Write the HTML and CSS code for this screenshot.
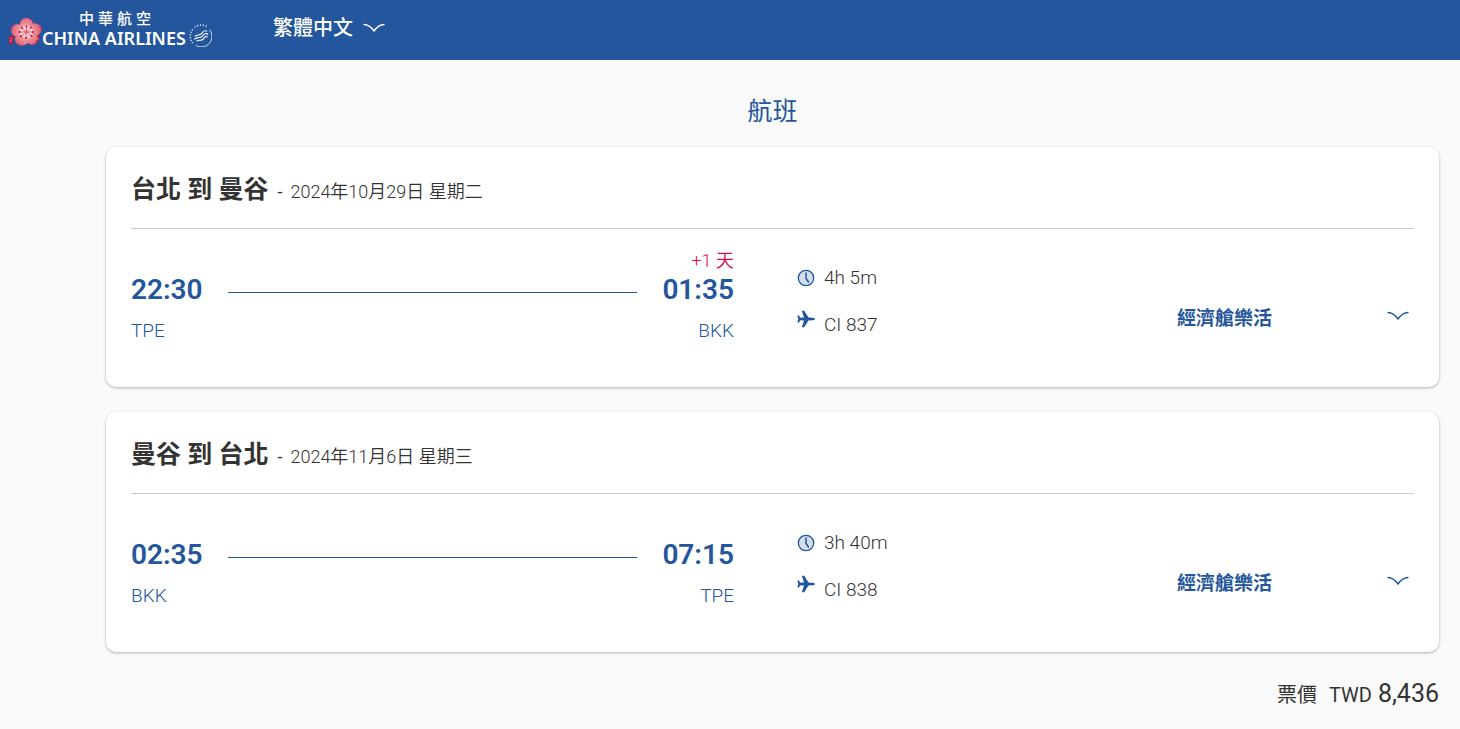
FILE: index.html
```html
<!DOCTYPE html>
<html lang="zh-Hant">
<head>
    <meta charset="UTF-8">
    <meta name="viewport" content="width=device-width, initial-scale=1.0">
    <title>China Airlines</title>
    <link rel="stylesheet" href="styles.css">
</head>
<body>
    <!-- shared icons -->
    <svg class="sprite" aria-hidden="true">
        <symbol id="chevron" viewBox="0 0 22 10">
            <path d="M1 1.5C5 1.5 8.5 4.5 11 8C13.5 4.5 17 1.5 21 1.5" fill="none" stroke="currentColor" stroke-width="1.3" stroke-linecap="round"/>
        </symbol>
        <symbol id="clock" viewBox="0 0 18 18">
            <circle cx="9" cy="9" r="7.7" fill="#d3deed" stroke="#23569c" stroke-width="1.3"/>
            <path d="M9 4V9.5L11.5 13" fill="none" stroke="#23569c" stroke-width="1.5" stroke-linecap="round"/>
        </symbol>
        <symbol id="plane" viewBox="0 0 18 18">
            <path d="M18 9C18 8.3 17 7.8 15.8 7.7L11.5 7.6L7.2 0.8H4.8L7 7.5L3.5 7.7L1.9 5.5H0.3L1.3 9L0.3 12.5H1.9L3.5 10.3L7 10.5L4.8 17.2H7.2L11.5 10.4L15.8 10.3C17 10.2 18 9.7 18 9Z" fill="currentColor"/>
        </symbol>
    </svg>

    <header class="header">
        <a href="#" class="logo">
            <svg class="flower" viewBox="0 0 34 30" aria-hidden="true">
                <defs>
                    <radialGradient id="petal" gradientUnits="userSpaceOnUse" cx="18" cy="15" r="16">
                        <stop offset="0" stop-color="#fbd9da"/>
                        <stop offset="0.35" stop-color="#f3a3ab"/>
                        <stop offset="0.8" stop-color="#e66f80"/>
                        <stop offset="1" stop-color="#d0364f"/>
                    </radialGradient>
                </defs>
                <g fill="url(#petal)" stroke="#dc5a6f" stroke-width="0.4">
                    <ellipse cx="18.5" cy="7.5" rx="6.5" ry="6.5"/>
                    <ellipse cx="27" cy="12.5" rx="6.5" ry="6"/>
                    <ellipse cx="24" cy="21.5" rx="6.5" ry="6"/>
                    <ellipse cx="14" cy="22.5" rx="7" ry="6"/>
                    <ellipse cx="9.5" cy="13.5" rx="6.5" ry="6.3"/>
                </g>
                <circle cx="18.5" cy="15" r="6.5" fill="#f9d0d2"/>
                <path d="M18.5 15V9.5M18.5 15L14 11M18.5 15L23 10.5M18.5 15H11.5M18.5 15H25M18.5 15L13 19.5M18.5 15L18 21M18.5 15L23.5 19" stroke="#cf2443" stroke-width="0.6"/>
                <g fill="#c8102e">
                    <circle cx="18.5" cy="9.5" r="1"/>
                    <circle cx="14" cy="11" r="1"/>
                    <circle cx="23" cy="10.5" r="1"/>
                    <circle cx="11.5" cy="15" r="1"/>
                    <circle cx="25" cy="15" r="1"/>
                    <circle cx="13" cy="19.5" r="1"/>
                    <circle cx="18" cy="21" r="1"/>
                    <circle cx="23.5" cy="19" r="1"/>
                    <circle cx="30.5" cy="19.5" r="1.3"/>
                    <circle cx="29.5" cy="24.5" r="1.2"/>
                    <circle cx="6" cy="20" r="1"/>
                    <rect x="1" y="19" width="4" height="8.5" rx="1.8"/>
                </g>
                <path d="M2.2 21H3.8M3 20.5V26M2 23.5H4" stroke="#ee8a96" stroke-width="0.6"/>
            </svg>
            <span class="logo-text">
                <span class="logo-zh">中華航空</span>
                <span class="logo-en">CHINA AIRLINES</span>
            </span>
            <svg class="skyteam" viewBox="0 0 24 24" fill="none" stroke="#fff" aria-hidden="true">
                <path d="M21.5 6A11 11 0 0 1 7 22.2" stroke-width="0.8"/>
                <path d="M4 20A11 11 0 0 1 4.5 5M6 3.5A11 11 0 0 1 19 3" stroke-width="2" stroke-dasharray="1.2 1.7" opacity="0.75"/>
                <path d="M6 13C9 10 11 13 13.5 9.5S17 7 19 7.5M5.5 16C9 12.5 11.5 16 14 12.5S17.5 10 20 10.5M8 18C11 15.5 13 18.5 15 15.5S17 13 19.5 13.5" stroke-width="1.2"/>
            </svg>
        </a>
        <button type="button" class="language">
            繁體中文
            <svg class="chevron" aria-hidden="true"><use href="#chevron"/></svg>
        </button>
    </header>

    <main class="content">
        <h1>航班</h1>

        <section class="card">
            <div class="card-title">
                <h2>台北 到 曼谷</h2>
                <span class="dash">-</span>
                <span class="date">2024年10月29日 星期二</span>
            </div>
            <div class="flight">
                <div class="route">
                    <div class="stop">
                        <span class="time">22:30</span>
                        <span class="airport">TPE</span>
                    </div>
                    <div class="line"></div>
                    <div class="stop arrival">
                        <span class="next-day">+1 天</span>
                        <span class="time">01:35</span>
                        <span class="airport">BKK</span>
                    </div>
                </div>
                <div class="info">
                    <div class="info-row">
                        <svg class="icon" aria-hidden="true"><use href="#clock"/></svg>
                        <span>4h 5m</span>
                    </div>
                    <div class="info-row number">
                        <svg class="icon" aria-hidden="true"><use href="#plane"/></svg>
                        <span>CI 837</span>
                    </div>
                </div>
                <div class="fare">經濟艙樂活</div>
                <button type="button" class="toggle" aria-label="航班詳情">
                    <svg class="chevron" aria-hidden="true"><use href="#chevron"/></svg>
                </button>
            </div>
        </section>

        <section class="card">
            <div class="card-title">
                <h2>曼谷 到 台北</h2>
                <span class="dash">-</span>
                <span class="date">2024年11月6日 星期三</span>
            </div>
            <div class="flight">
                <div class="route">
                    <div class="stop">
                        <span class="time">02:35</span>
                        <span class="airport">BKK</span>
                    </div>
                    <div class="line"></div>
                    <div class="stop arrival">
                        <span class="time">07:15</span>
                        <span class="airport">TPE</span>
                    </div>
                </div>
                <div class="info">
                    <div class="info-row">
                        <svg class="icon" aria-hidden="true"><use href="#clock"/></svg>
                        <span>3h 40m</span>
                    </div>
                    <div class="info-row number">
                        <svg class="icon" aria-hidden="true"><use href="#plane"/></svg>
                        <span>CI 838</span>
                    </div>
                </div>
                <div class="fare">經濟艙樂活</div>
                <button type="button" class="toggle" aria-label="航班詳情">
                    <svg class="chevron" aria-hidden="true"><use href="#chevron"/></svg>
                </button>
            </div>
        </section>

        <div class="total">
            <span class="total-label">票價</span>
            <span class="currency">TWD</span>
            <span class="amount">8,436</span>
        </div>
    </main>
</body>
</html>
```

FILE: styles.css
```css
* {
    box-sizing: border-box;
}
body {
    margin: 0;
    background-color: #fafafa;
    color: #333;
    font-family: Roboto, "Noto Sans CJK TC", sans-serif;
    font-size: 18px;
}
button {
    padding: 0;
    border: none;
    background: none;
    font-family: inherit;
    cursor: pointer;
}
.sprite {
    display: none;
}
.chevron {
    display: block;
    width: 22px;
    height: 10px;
}

/* header */
.header {
    display: flex;
    align-items: flex-start;
    height: 60px;
    padding-left: 8px;
    background-color: #23569c;
    color: #fff;
}
.logo {
    display: flex;
    align-items: flex-end;
    width: 265px;
    padding-top: 7px;
    color: #fff;
    text-decoration: none;
}
.flower {
    width: 34px;
    height: 30px;
}
.logo-text {
    display: flex;
    flex-direction: column;
}
.logo-zh {
    padding-left: 37px;
    font-family: "Noto Sans CJK TC", sans-serif;
    font-size: 15px;
    font-weight: 500;
    line-height: 22px;
    letter-spacing: 4px;
}
.logo-en {
    font-family: "Noto Sans", sans-serif;
    font-size: 18px;
    font-weight: 600;
    line-height: 18px;
    white-space: nowrap;
}
.skyteam {
    width: 23px;
    height: 23px;
    margin-left: 3px;
}
.language {
    display: flex;
    align-items: center;
    gap: 10px;
    padding-top: 13px;
    color: #fff;
    font-size: 20px;
    font-weight: 500;
    line-height: 30px;
}

/* flight cards */
.content {
    padding: 33px 21px 20px 106px;
}
h1 {
    margin: 0 0 16px;
    color: #23569c;
    font-size: 25px;
    font-weight: 400;
    line-height: 38px;
    text-align: center;
}
.card {
    padding: 0 25px 44px;
    border-radius: 10px;
    background-color: #fff;
    box-shadow: 0 1px 3px rgba(0,0,0,0.3);
}
.card + .card {
    margin-top: 25px;
}
.card-title {
    display: flex;
    align-items: baseline;
    height: 82px;
    padding-top: 27px;
    border-bottom: 1px solid #ccc;
}
h2 {
    margin: 0;
    font-size: 25px;
    font-weight: 700;
    line-height: 32px;
}
.dash {
    padding: 0 8px 0 9px;
}
.date {
    font-weight: 350;
}
.flight {
    display: grid;
    grid-template-columns: 47fr 30fr 16fr 7fr;
    padding-top: 20px;
    color: #23569c;
}
.route {
    display: flex;
    align-items: flex-end;
    height: 94px;
}
.stop {
    display: flex;
    flex-direction: column;
}
.arrival {
    align-items: flex-end;
}
.next-day {
    color: #d60b52;
    font-size: 18px;
    font-weight: 350;
    line-height: 24px;
}
.time {
    font-size: 28px;
    font-weight: 600;
    line-height: 34px;
}
.airport {
    padding-top: 12px;
    font-size: 19px;
    font-weight: 350;
    line-height: 24px;
}
.line {
    flex: 1;
    margin: 0 25px 50px;
    border-top: 1px solid #23569c;
}
.info {
    padding: 17px 0 0 63px;
}
.info-row {
    display: flex;
    align-items: center;
    gap: 9px;
    height: 24px;
    margin-bottom: 20px;
}
.info-row span {
    color: #333;
    font-size: 19px;
    font-weight: 350;
    line-height: 30px;
}
.number {
    align-items: flex-start;
    margin-bottom: 0;
}
.icon {
    width: 18px;
    height: 18px;
}
.fare {
    padding: 56px 0 0 58px;
    font-size: 19px;
    font-weight: 700;
    line-height: 28px;
    white-space: nowrap;
}
.toggle {
    align-self: start;
    justify-self: end;
    margin: 62px 5px 0 0;
    color: #23569c;
}

/* ticket price */
.total {
    display: flex;
    justify-content: flex-end;
    align-items: baseline;
    margin-top: 26px;
    font-size: 20px;
    line-height: 32px;
}
.currency {
    padding: 0 6px 0 12px;
}
.amount {
    font-size: 25px;
}
```
